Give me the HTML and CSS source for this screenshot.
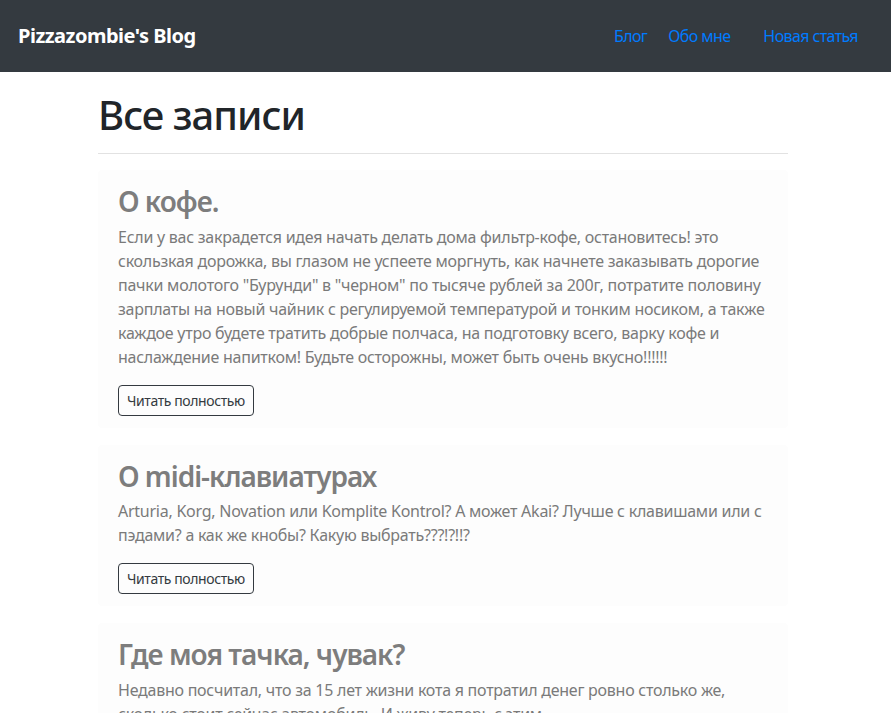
FILE: index.html
```html
<!DOCTYPE html>
<html lang="ru">
<head>
<meta charset="utf-8">
<title>Pizzazombie's Blog</title>
<link rel="stylesheet" href="styles.css">
</head>
<body>
<nav class="navbar">
  <a class="brand" href="#">Pizzazombie's Blog</a>
  <ul class="nav">
    <li><a href="#">Блог</a></li>
    <li><a href="#">Обо мне</a></li>
  </ul>
  <ul class="nav nav-right">
    <li><a href="#">Новая статья</a></li>
  </ul>
</nav>
<main class="container">
  <h1 class="page-title">Все записи</h1>
  <hr class="divider">
  <article class="post">
    <h2 class="post-title">О кофе.</h2>
    <p class="post-text">Если у вас закрадется идея начать делать дома фильтр-кофе, остановитесь! это скользкая дорожка, вы глазом не успеете моргнуть, как начнете заказывать дорогие пачки молотого "Бурунди" в "черном" по тысяче рублей за 200г, потратите половину зарплаты на новый чайник с регулируемой температурой и тонким носиком, а также каждое утро будете тратить добрые полчаса, на подготовку всего, варку кофе и наслаждение напитком! Будьте осторожны, может быть очень вкусно!!!!!!</p>
    <a class="btn" href="#">Читать полностью</a>
  </article>
  <article class="post">
    <h2 class="post-title">О midi-клавиатурах</h2>
    <p class="post-text">Arturia, Korg, Novation или Komplite Kontrol? А может Akai? Лучше с клавишами или с пэдами? а как же кнобы? Какую выбрать???!?!!?</p>
    <a class="btn" href="#">Читать полностью</a>
  </article>
  <article class="post">
    <h2 class="post-title">Где моя тачка, чувак?</h2>
    <p class="post-text">Недавно посчитал, что за 15 лет жизни кота я потратил денег ровно столько же, сколько стоит сейчас автомобиль. И живу теперь с этим.</p>
    <a class="btn" href="#">Читать полностью</a>
  </article>
</main>
</body>
</html>
```

FILE: styles.css
```css
* { box-sizing: border-box; }
html, body { margin: 0; padding: 0; }
body {
  font-family: "Noto Sans", "Open Sans", sans-serif;
  font-size: 16px;
  line-height: 1.5;
  color: #212529;
  background: #fff;
}
a { text-decoration: none; }
.navbar {
  display: flex;
  align-items: center;
  height: 72px;
  background: #343a40;
  padding: 0 33px 0 18px;
}
.brand {
  color: #fff;
  font-weight: 700;
  font-size: 20px;
  letter-spacing: -0.5px;
}
.nav {
  list-style: none;
  display: flex;
  margin: 0;
  padding: 0;
  gap: 21px;
}
.nav:first-of-type { margin-left: auto; }
.nav-right { margin-left: 33px; }
.nav a {
  color: #007bff;
  font-size: 16px;
  letter-spacing: -0.6px;
}
.container {
  width: 690px;
  margin: 0 auto 0 98px;
}
.page-title {
  font-size: 40px;
  font-weight: 500;
  line-height: 1.2;
  margin: 19px 0 14px;
  letter-spacing: -1px;
}
.divider {
  border: 0;
  border-top: 1px solid #e2e2e2;
  margin: 0 0 16px;
}
.post {
  background: #fdfdfd;
  border-radius: 4px;
  padding: 15px 10px 12px 20px;
  margin-bottom: 17px;
  color: #7b7b7b;
}
.post-title {
  font-size: 28px;
  font-weight: 600;
  line-height: 1.2;
  margin: 0 0 6px;
  color: #7d7d7d;
  letter-spacing: -1px;
}
.post-text {
  margin: 0 0 16px;
  font-size: 16px;
  line-height: 24px;
  letter-spacing: -0.25px;
  color: #7a7a7a;
}
.btn {
  display: inline-block;
  font-size: 14px;
  line-height: 21px;
  padding: 4px 8px;
  border: 1px solid #343a40;
  border-radius: 4px;
  color: #343a40;
  letter-spacing: -0.4px;
}
```
